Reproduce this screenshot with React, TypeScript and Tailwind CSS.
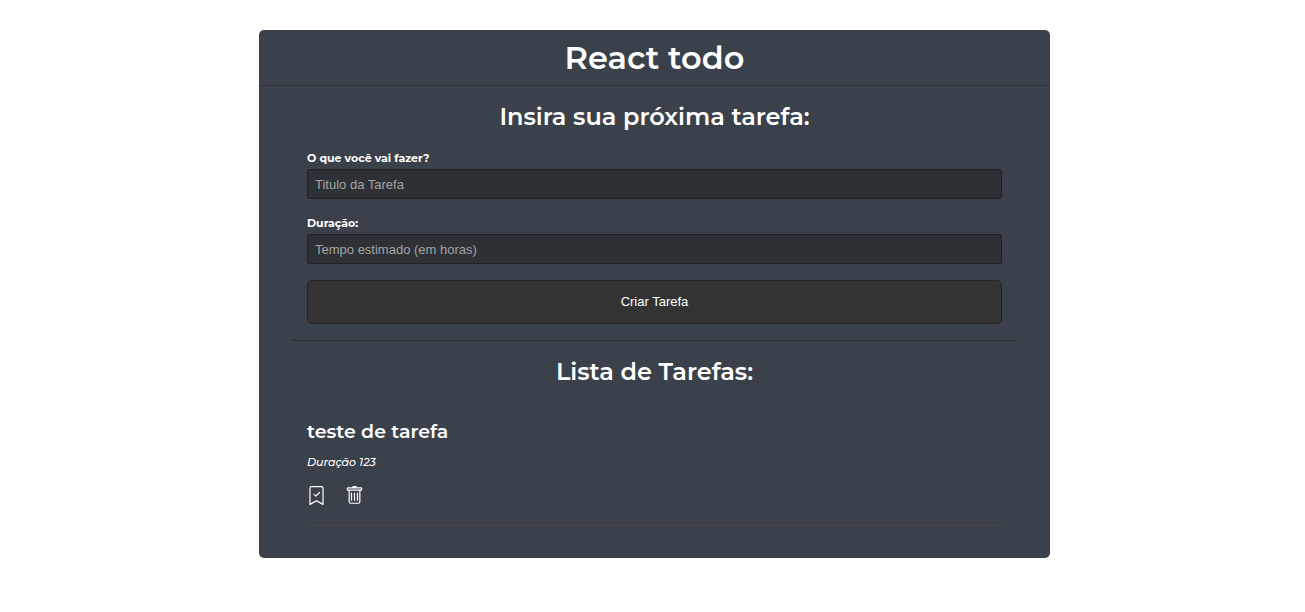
import { useState } from "react";
import type { FormEvent } from "react";
import { BsBookmarkCheck, BsTrash } from "react-icons/bs";

interface Task {
  id: number;
  title: string;
  time: string;
  done: boolean;
}

const fieldClass =
  "h-[30px] w-full rounded-xs border border-[#202225] bg-[#2d3035] px-[7px] font-['Liberation_Sans',Arial,sans-serif] text-[13px] text-white outline-none placeholder:text-[#a4a4a4]";
const labelClass = "text-[11px] leading-[21px] font-bold";
const headingClass = "text-center text-2xl leading-[30px] font-semibold";

export default function App() {
  const [title, setTitle] = useState("");
  const [time, setTime] = useState("");
  const [tasks, setTasks] = useState<Task[]>([
    { id: 1, title: "teste de tarefa", time: "123", done: false },
  ]);

  function handleSubmit(event: FormEvent) {
    event.preventDefault();
    setTasks([...tasks, { id: Date.now(), title, time, done: false }]);
    setTitle("");
    setTime("");
  }

  return (
    <div className="py-[30px] pr-4 pl-5">
      <main className="mx-auto max-w-[791px] rounded-[5px] bg-[#3b414b] font-[Montserrat,Inter,sans-serif] text-white">
        <header className="border-b border-[#2d3037] pt-2 pb-[7px]">
          <h1 className="text-center text-[32px] leading-10 font-semibold">React todo</h1>
        </header>

        <section className="mx-8 border-b border-[#2d3037] px-4 py-4">
          <h2 className={headingClass}>Insira sua próxima tarefa:</h2>
          <form onSubmit={handleSubmit} className="mt-4 flex flex-col gap-4">
            <div className="flex flex-col gap-[14px]">
              <div className="flex flex-col">
                <label htmlFor="title" className={labelClass}>O que você vai fazer?</label>
                <input
                  id="title"
                  type="text"
                  className={fieldClass}
                  placeholder="Titulo da Tarefa"
                  value={title}
                  onChange={(e) => setTitle(e.target.value)}
                  required
                />
              </div>
              <div className="flex flex-col">
                <label htmlFor="time" className={labelClass}>Duração:</label>
                <input
                  id="time"
                  type="text"
                  className={fieldClass}
                  placeholder="Tempo estimado (em horas)"
                  value={time}
                  onChange={(e) => setTime(e.target.value)}
                  required
                />
              </div>
            </div>
            <button
              type="submit"
              className="h-11 w-full cursor-pointer rounded-[5px] border border-[#222] bg-[#333] font-['Liberation_Sans',Arial,sans-serif] text-[13px] text-white"
            >
              Criar Tarefa
            </button>
          </form>
        </section>

        <section className="mx-8 px-4 pt-4 pb-8">
          <h2 className={headingClass}>Lista de Tarefas:</h2>
          <ul className="mt-[15px]">
            {tasks.map((task) => (
              <li key={task.id} className="border-b border-[#45454b] pt-4 pb-5">
                <h3 className={task.done ? "text-[19px] leading-7 font-semibold line-through" : "text-[19px] leading-7 font-semibold"}>
                  {task.title}
                </h3>
                <p className="mt-2 text-[11px] leading-4 font-medium italic">Duração {task.time}</p>
                <div className="mt-4 flex gap-[19px]">
                  <button
                    type="button"
                    aria-label="Concluir"
                    className="cursor-pointer"
                    onClick={() => setTasks(tasks.map((t) => (t.id === task.id ? { ...t, done: !t.done } : t)))}
                  >
                    <BsBookmarkCheck size={19} />
                  </button>
                  <button
                    type="button"
                    aria-label="Excluir"
                    className="cursor-pointer"
                    onClick={() => setTasks(tasks.filter((t) => t.id !== task.id))}
                  >
                    <BsTrash size={19} />
                  </button>
                </div>
              </li>
            ))}
          </ul>
        </section>
      </main>
    </div>
  );
}
